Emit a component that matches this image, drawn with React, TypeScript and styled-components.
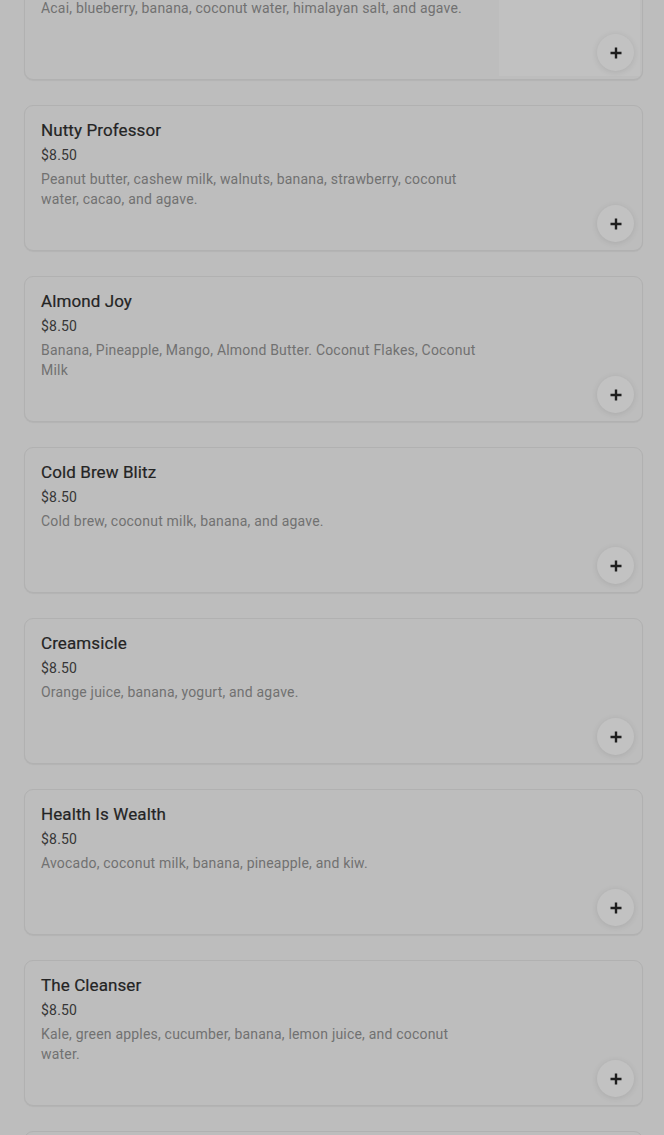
import React from 'react';
import styled, { createGlobalStyle } from 'styled-components';

type Item = {
  name: string;
  price: string;
  description: string;
  image?: boolean;
};

const items: Item[] = [
  { name: 'Acai Bowl', price: '$8.50', description: 'Acai, blueberry, banana, coconut water, himalayan salt, and agave.', image: true },
  { name: 'Nutty Professor', price: '$8.50', description: 'Peanut butter, cashew milk, walnuts, banana, strawberry, coconut water, cacao, and agave.' },
  { name: 'Almond Joy', price: '$8.50', description: 'Banana, Pineapple, Mango, Almond Butter. Coconut Flakes, Coconut Milk' },
  { name: 'Cold Brew Blitz', price: '$8.50', description: 'Cold brew, coconut milk, banana, and agave.' },
  { name: 'Creamsicle', price: '$8.50', description: 'Orange juice, banana, yogurt, and agave.' },
  { name: 'Health Is Wealth', price: '$8.50', description: 'Avocado, coconut milk, banana, pineapple, and kiw.' },
  { name: 'The Cleanser', price: '$8.50', description: 'Kale, green apples, cucumber, banana, lemon juice, and coconut water.' },
  { name: 'Green Machine', price: '$8.50', description: 'Spinach, kale, banana, mango, and coconut water.' },
];

const GlobalStyle = createGlobalStyle`
  html, body {
    margin: 0;
    padding: 0;
    background: #bdbdbd;
    overflow: hidden;
  }
  body {
    font-family: Roboto, "Liberation Sans", sans-serif;
    -webkit-font-smoothing: antialiased;
  }
`;

const Page = styled.div`
  height: 1135px;
  overflow: hidden;
  background: #bdbdbd;
`;

const List = styled.div`
  display: flex;
  flex-direction: column;
  gap: 25px;
  padding: 0 21px 0 24px;
  margin-top: -66px;
`;

const Card = styled.div`
  position: relative;
  box-sizing: border-box;
  height: 146px;
  display: flex;
  gap: 16px;
  padding-left: 16px;
  background: #bdbdbd;
  border: 1px solid #b1b1b1;
  border-radius: 9px;
  box-shadow: 0 1px 1px rgba(0, 0, 0, 0.05);
  overflow: hidden;
`;

const Info = styled.div`
  width: 442px;
  padding-top: 14px;
  display: flex;
  flex-direction: column;
`;

const Name = styled.div`
  font-size: 17px;
  line-height: 20px;
  font-weight: 400;
  color: #242424;
  letter-spacing: 0.1px;
  -webkit-text-stroke: 0.2px #242424;
`;

const Price = styled.div`
  margin-top: 6px;
  font-size: 14px;
  line-height: 18px;
  color: #363636;
  letter-spacing: 0.2px;
`;

const Description = styled.div`
  margin-top: 5px;
  font-size: 14px;
  line-height: 20px;
  color: #717171;
  letter-spacing: 0.2px;
`;

const Thumb = styled.div`
  width: 141px;
  height: 141px;
  flex: none;
  background: #c1c1c1;
`;

const AddButton = styled.button`
  position: absolute;
  right: 8px;
  bottom: 8px;
  width: 37px;
  height: 37px;
  border-radius: 50%;
  border: none;
  padding: 0;
  display: flex;
  align-items: center;
  justify-content: center;
  background: #c2c2c2;
  box-shadow: 0 1px 6px rgba(0, 0, 0, 0.1);
  color: #1e1e1e;
  cursor: pointer;
`;

const PlusIcon = () => (
  <svg width="12" height="12" viewBox="0 0 12 12" fill="none">
    <path d="M6 0.5v11M0.5 6h11" stroke="currentColor" strokeWidth="2.4" />
  </svg>
);

const App: React.FC = () => {
  return (
    <Page>
      <GlobalStyle />
      <List>
        {items.map((item) => (
          <Card key={item.name}>
            <Info>
              <Name>{item.name}</Name>
              <Price>{item.price}</Price>
              <Description>{item.description}</Description>
            </Info>
            {item.image && <Thumb />}
            <AddButton aria-label={`Add ${item.name}`}>
              <PlusIcon />
            </AddButton>
          </Card>
        ))}
      </List>
    </Page>
  );
};

export default App;
